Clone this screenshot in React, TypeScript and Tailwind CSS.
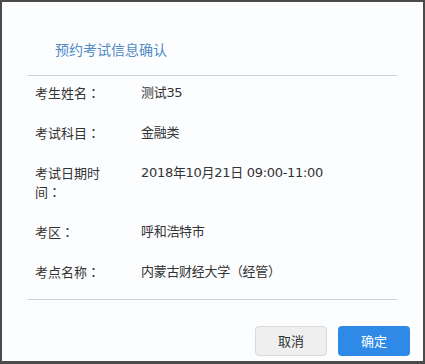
const font = { fontFamily: '"DejaVu Sans", "Noto Sans CJK SC", sans-serif' };
const cjk = { fontFamily: '"Noto Sans CJK SC", sans-serif' };
const colon = { fontFamily: '"Noto Sans CJK JP", sans-serif' };

const rows = [
  { label: ["考生姓名"], value: "测试35" },
  { label: ["考试科目"], value: "金融类" },
  { label: ["考试日期时", "间"], value: "2018年10月21日 09:00-11:00" },
  { label: ["考区"], value: "呼和浩特市" },
  { label: ["考点名称"], value: "内蒙古财经大学（经管）" },
];

export default function App() {
  return (
    <div
      className="w-[425px] h-[364px] border-2 border-b-[3px] border-[#4b4b4b] bg-[#fcfdfe] flex flex-col"
      style={font}
    >
      <div className="pt-[37px] pl-[53px] text-[14px] leading-[20px] text-[#4f8ac6]" style={cjk}>
        预约考试信息确认
      </div>

      <div className="mx-[26px] mt-[16px] h-px bg-[#cfcfcf]" />

      <div className="flex flex-col gap-[21px] pt-[7px] pl-[33px] text-[13px] leading-[19px] text-[#333]">
        {rows.map((r) => (
          <div key={r.label.join("")} className="flex">
            <div className="w-[70px]" style={cjk}>
              {r.label.map((line, i) => (
                <div key={line}>
                  {line}
                  {i === r.label.length - 1 && <span style={colon}>：</span>}
                </div>
              ))}
            </div>
            <div className="ml-[36px] tracking-[-0.3px]">{r.value}</div>
          </div>
        ))}
      </div>

      <div className="mx-[26px] mt-[18px] h-px bg-[#cfcfcf]" />

      <div className="flex justify-end gap-[11px] pr-[13px] mt-[26px]" style={cjk}>
        <button className="w-[72px] h-[30px] rounded-[4px] border border-[#d9d9d9] bg-[#efefef] text-[13px] text-[#333]">
          取消
        </button>
        <button className="w-[72px] h-[30px] rounded-[4px] bg-[#2e8ae6] text-[13px] text-white">
          确定
        </button>
      </div>
    </div>
  );
}
